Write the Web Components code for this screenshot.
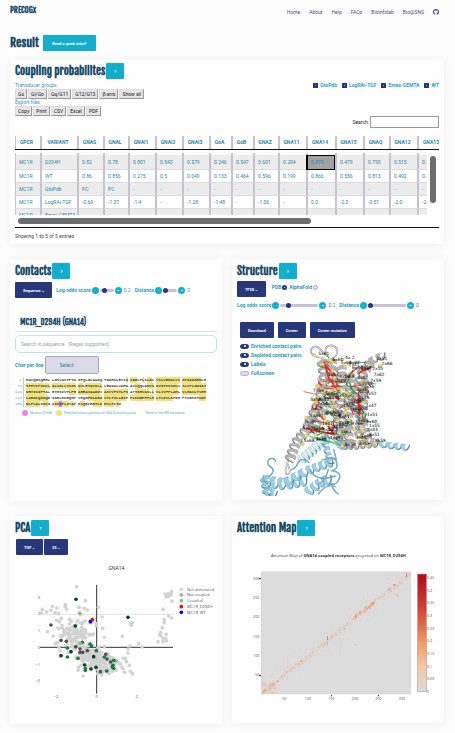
<!DOCTYPE html>
<html lang="en">
<head>
<meta charset="utf-8">
<title>PRECOGx</title>
<style>
  body { margin: 0; background: #fdfdfd; color: #444; font: 5px/6px Roboto, "Liberation Sans", sans-serif; }
</style>
</head>
<body>
<precog-app></precog-app>
<script>
const COMMON = `
  *, *::before, *::after { box-sizing: border-box; }
  :host { display: block; --teal: #11aecd; --navy: #283779; --ink: #174a68; --head: "Fjalla One", "Liberation Sans Narrow", "Liberation Sans", sans-serif; }
  button, input, select { font: inherit; margin: 0; }
  h1, h2, h3 { margin: 0; font-family: var(--head); font-weight: 700; color: var(--ink); }
  label { color: #2c9dbb; }
  svg { display: block; width: 100%; height: auto; }
`;
function define(name, html, setup) {
  customElements.define(name, class extends HTMLElement {
    connectedCallback() {
      if (this.shadowRoot) return;
      const root = this.attachShadow({ mode: 'open' });
      const t = document.createElement('template');
      const body = typeof html === 'function' ? html(this) : html;
      t.innerHTML = body.replace('<style>', '<style>' + COMMON);
      root.append(t.content.cloneNode(true));
      if (setup) setup(root, this);
    }
  });
}
function rng(seed) {
  return () => { seed = (seed * 1664525 + 1013904223) >>> 0; return seed / 4294967296; };
}

define('action-button', el => `
<style>
  :host { display: inline-block; }
  button { display: block; height: 16px; padding: 0 8px; border: 0; border-radius: 1px; background: var(--teal); color: #fff; font-size: 4px; font-weight: 700; line-height: 5px; white-space: nowrap; }
  :host([tone="navy"]) button { background: var(--navy); }
  :host([wide]) button { padding: 0 9px; }
</style>
<button type="button"><slot></slot></button>`);

define('panel-card', el => `
<style>
  :host { background: #fefefe; padding: 4px 5px; box-shadow: 0 1px 9px rgba(0,0,0,.055); min-width: 0; }
  header { display: flex; align-items: center; gap: 1px; height: 16px; }
  h2 { font-size: 11px; line-height: 16px; white-space: nowrap; }
</style>
<header><h2>${el.getAttribute('heading')}</h2><action-button>?</action-button></header>
<slot></slot>`);

define('site-header', `
<style>
  header { display: flex; justify-content: space-between; align-items: center; padding: 0 16px 0 10px; height: 20px; }
  .brand { font: 700 8px/12px var(--head); color: var(--ink); text-decoration: none; }
  nav { display: flex; align-items: center; gap: 9px; padding-top: 3px; }
  nav a { color: #47508c; text-decoration: none; }
  svg { width: 6px; height: 6px; }
</style>
<header><a class="brand" href="#">PRECOGx</a>
<nav><a href="#">Home</a><a href="#">About</a><a href="#">Help</a><a href="#">FAQs</a><a href="#">Bioinfolab</a><a href="#">Bio@SNS</a>
<a href="#" aria-label="GitHub"><svg viewBox="0 0 16 16"><path fill="#283779" d="M8 0C3.58 0 0 3.58 0 8c0 3.54 2.29 6.53 5.47 7.59.4.07.55-.17.55-.38 0-.19-.01-.82-.01-1.49-2.01.37-2.53-.49-2.69-.94-.09-.23-.48-.94-.82-1.13-.28-.15-.68-.52-.01-.53.63-.01 1.08.58 1.23.82.72 1.21 1.87.87 2.33.66.07-.52.28-.87.51-1.07-1.78-.2-3.64-.89-3.64-3.95 0-.87.31-1.59.82-2.15-.08-.2-.36-1.02.08-2.12 0 0 .67-.21 2.2.82.64-.18 1.32-.27 2-.27s1.36.09 2 .27c1.53-1.04 2.2-.82 2.2-.82.44 1.1.16 1.92.08 2.12.51.56.82 1.27.82 2.15 0 3.07-1.87 3.75-3.65 3.95.29.25.54.73.54 1.48 0 1.07-.01 1.93-.01 2.2 0 .21.15.46.55.38A8.01 8.01 0 0 0 16 8c0-4.42-3.58-8-8-8z"/></svg></a></nav></header>`);

const COLS = ['GPCR','VARIANT','GNAS','GNAL','GNAI1','GNAI2','GNAI3','GoA','GoB','GNAZ','GNA11','GNA14','GNA15','GNAQ','GNA12','GNA13'];
const W = [25,37,26,25,27,27,27,22,22,25,28,29,28,26,28,29];
const ROWS = [
  ['MC1R','D294H','0.82','0.78','0.801','0.543','0.579','0.246','0.547','0.601','0.204','0.879','0.479','0.795','0.515','0.536'],
  ['MC1R','WT','0.86','0.856','0.275','0.5','0.049','0.133','0.464','0.596','0.199','0.866','0.556','0.813','0.492','0.495'],
  ['MC1R','GtoPdb','PC','PC','-','-','-','-','-','-','-','-','-','-','-','-'],
  ['MC1R','LogRAi-TGF','-0.69','-1.37','-1.4','-','-1.28','-1.48','-','-1.06','-','0.0','-2.0','-0.51','-2.0','-2.0'],
  ['MC1R','Emax-GEMTA','-','-','-','-','-','-','-','-','-','-','-','-','-','-'],
];
const colgroup = '<colgroup>' + W.map(w => `<col style="width:${w}px">`).join('') + '</colgroup>';
define('coupling-table', `
<style>
  :host { border-bottom: 1px solid #111; }
  table { border-collapse: separate; border-spacing: 0; table-layout: fixed; width: 431px; }
  .head { overflow: hidden; height: 14px; border-bottom: 1px solid #111; }
  th { height: 13px; padding: 0 3px 1px 0; border-left: 1px solid #c3c1d2; color: #2389aa; font-weight: 700; text-align: center; white-space: nowrap; }
  th + th, td + td { border-left-width: 2px; }
  .mid { display: flex; justify-content: space-between; padding: 3px 3px 0 0; }
  .body { flex: 0 1 412px; overflow: hidden; height: 62px; }
  tr.lead td { height: 2px; border-bottom: 0; background: #fefefe; }
  td { height: 13px; padding: 0 0 1px 3px; border-left: 1px solid #c3c1d2; border-bottom: 1px solid #dcdcdf; color: #2e86ad; white-space: nowrap; overflow: hidden; }
  tr.first td { height: 15px; }
  tr.alt { background: #ececec; }
  td.best { background: #a1a1a1; outline: 1px solid #000; outline-offset: -1px; border-left-color: #000; }
  .vbar { width: 6px; height: 47px; margin-top: 3px; border-radius: 3px; background: #6d6d6d; }
  .hbar { width: 69%; height: 6px; margin: 3px 0 3px 3px; border-radius: 3px; background: #6d6d6d; }
</style>
<div class="head"><table>${colgroup}<thead><tr>${COLS.map(c => `<th scope="col">${c}</th>`).join('')}</tr></thead></table></div>
<div class="mid"><div class="body"><table>${colgroup}<tbody><tr class="lead" aria-hidden="true">${COLS.map(() => '<td></td>').join('')}</tr>
${ROWS.map((r, i) => `<tr class="${i % 2 ? '' : 'alt'}${i ? '' : ' first'}">${r.map((v, j) => `<td${i === 0 && j === 11 ? ' class="best"' : ''}>${v}</td>`).join('')}</tr>`).join('')}
</tbody></table></div><div class="vbar"></div></div><div class="hbar"></div>`);

define('coupling-panel', `
<style>
  .cap { color: #2c9dbb; line-height: 7px; }
  .top { display: flex; justify-content: space-between; padding-top: 3px; }
  .row { display: flex; gap: 1px; height: 10px; }
  .row button { height: 10px; padding: 0 2px; background: #e6e6ea; color: #222; border: 1px solid; border-color: #ddd #999 #999 #ddd; line-height: 6px; white-space: nowrap; }
  .checks { display: flex; gap: 5px; height: 6px; font-weight: 700; }
  .checks label { display: flex; align-items: center; gap: 2px; color: #1fa5c4; }
  .checks input { appearance: none; width: 5px; height: 5px; background: var(--navy); display: grid; place-items: center; }
  .checks input:checked::after { content: ""; width: 1px; height: 1px; background: #98a0c8; }
  .search { display: flex; justify-content: flex-end; align-items: center; gap: 1px; margin-bottom: 8px; }
  .search label { color: #222; }
  .search input { width: 69px; height: 12px; border: 1px solid #999; background: #fff; padding: 0 2px; }
  p { margin: 5px 0 1px; line-height: 6px; }
</style>
<panel-card heading="Coupling probabilites">
  <div class="top"><div>
    <div class="cap">Transducer groups</div>
    <div class="row"><button>Gs</button><button>Gi/Go</button><button>Gq/G11</button><button>G12/G13</button><button>β-arrs</button><button>Show all</button></div>
    <div class="cap">Export files</div>
    <div class="row"><button>Copy</button><button>Print</button><button>CSV</button><button>Excel</button><button>PDF</button></div>
  </div>
  <div class="checks">${['GtoPdb','LogRAi-TGF','Emax-GEMTA','WT'].map(c => `<label><input type="checkbox" checked>${c}</label>`).join('')}</div></div>
  <div class="search"><label for="q">Search:</label><input id="q" type="search"></div>
  <coupling-table></coupling-table>
  <p>Showing 1 to 5 of 5 entries</p>
</panel-card>`);

define('score-slider', el => `
<style>
  :host { display: flex; align-items: center; gap: 1px; height: 8px; color: #2c9dbb; white-space: nowrap; }
  label { font-weight: 700; }
  button { width: 7px; height: 7px; border: 0; border-radius: 50%; padding: 0; background: var(--teal); color: #fff; font-size: 4px; line-height: 7px; }
  input { appearance: none; background: none; width: var(--track, 14px); height: 5px; }
  input::-webkit-slider-runnable-track { height: 3px; border-radius: 2px; background: #c5c3d3; }
  input::-webkit-slider-thumb { appearance: none; width: 5px; height: 5px; margin-top: -1px; border-radius: 50%; background: var(--navy); }
  output { padding-left: 1px; color: #3f93ad; }
</style>
<label for="r">${el.getAttribute('label')}</label><button type="button" aria-label="Decrease">-</button><input id="r" type="range" min="0" max="100" value="${el.getAttribute('at')}"><button type="button" aria-label="Increase">+</button><output for="r">${el.getAttribute('value')}</output>`);

const SEQ = [
  [1, 'MAVQGSQRRLLGSLNSTPTAIPQLGLAANQTGARCLEVSISDGLFLSLGLVSLVENALVVATIAKNRNLH', '000000000000000000000000000000000000000111100101101111111111111111110000'],
  [71, 'SPMYCFICCLALSDLLVSGSNVLETAVILLLEAGALVARAAVLQQLDNVIDVITCSSMLSSLCFLGAIAV', '1111111111111111111111011111110000000000001100011111111111101111111111'],
  [141, 'DRYISIFYALRYHSIVTLPRARRAVAAIWVASVVFSTLFIAYYDHVAVLLCLVVFFLAMLVLMAVLYVHM', '1111111100000000011111111111101111111111001111110111111111101111111111'],
  [211, 'LARACQHAQGIARLHKRQRPVHQGFGLKGAVTLTILLGIFFLCWGPFFLHLTLIVLCPEHPTCGCIFKNF', '1111111110000000000000001111111111111110111111111111111110000000000111'],
  [281, 'NLFLALIICNAIIDPLIYAFHSQELRRTLKEVLTCSW', '1111110110011211101001100011111111010'],
];
function seqLine([n, s, m]) {
  let out = '';
  for (let g = 0; g < s.length; g += 10) {
    out += '<span>';
    for (let i = g; i < Math.min(g + 10, s.length);) {
      let j = i;
      while (j < Math.min(g + 10, s.length) && m[j] === m[i]) j++;
      const part = s.slice(i, j);
      out += m[i] === '1' ? `<mark>${part}</mark>` : m[i] === '2' ? `<mark class="mut">${part}</mark>` : part;
      i = j;
    }
    out += '</span>';
  }
  return `<li><b>${n}</b>${out}</li>`;
}
define('contacts-panel', `
<style>
  .row { display: flex; align-items: center; gap: 4px; padding-top: 3px; }
  h3 { font-size: 8px; line-height: 12px; padding: 18px 5px 3px; border-bottom: 1px solid #dde0ea; }
  .find { display: block; width: 100%; height: 18px; margin-top: 3px; padding: 0 5px; border: 1px solid #bfe6ee; border-radius: 5px; background: #fff; }
  .find::placeholder { color: #a0a4ab; }
  .cpl { display: flex; align-items: center; gap: 1px; margin-top: 3px; }
  .cpl label { font-weight: 700; }
  select { appearance: none; width: 54px; height: 18px; border: 1px solid #a9a7b8; border-radius: 2px; background: #dadae8; color: #2c83a5; padding: 0 14px; }
  ol { list-style: none; margin: 3px 0 0; padding: 0; font: 700 4px/6px "Liberation Mono", monospace; color: #444; }
  li { display: flex; gap: 2px; white-space: nowrap; }
  li b { width: 7px; text-align: right; color: #3a9bb5; font-weight: 400; border-right: 1px solid #bcd; padding-right: 1px; box-sizing: content-box; }
  mark { background: #f0e27c; color: inherit; padding: 1px 0; }
  mark.mut { background: #ee6fee; }
  .legend { display: flex; align-items: center; gap: 2px; margin: 3px 7px 81px; font-size: 3px; color: #5db0c4; white-space: nowrap; }
  i { width: 6px; height: 6px; border-radius: 50%; background: #ee7fee; }
  i.y { background: #eee086; margin-left: 2px; }
  .hov { margin-left: 8px; }
</style>
<panel-card heading="Contacts">
  <div class="row"><action-button tone="navy">Sequence ~</action-button><score-slider label="Log odds score" at="30" value="0.2"></score-slider><score-slider label="Distance" at="0" value="0"></score-slider></div>
  <h3>MC1R_D294H (GNA14)</h3>
  <input class="find" type="text" aria-label="Search in sequence" placeholder="Search in sequence.  (Regex supported)">
  <div class="cpl"><label for="c">Char per line</label><select id="c"><option>Select</option></select></div>
  <ol>${SEQ.map(seqLine).join('')}</ol>
  <div class="legend"><i></i>Mutation D294H<i class="y"></i>Predicted contact positions for GNA14 coupling group<span class="hov">Hover to view BW annotation</span></div>
</panel-card>`);

/* Cartoon view of the receptor and its G protein. */
function protein() {
  const r = rng(11);
  let s = '';
  const helix = (pts, w, fill, edge, step = 20) => {
    for (let k = 0; k < pts.length - 1; k++) {
      const [x1, y1] = pts[k], [x2, y2] = pts[k + 1];
      const L = Math.hypot(x2 - x1, y2 - y1), n = Math.max(1, Math.round(L / step));
      const ux = (x2 - x1) / L, uy = (y2 - y1) / L, nx = -uy, ny = ux, d = L / n;
      for (let i = 0; i < n; i++) {
        const cx = x1 + ux * d * (i + .5), cy = y1 + uy * d * (i + .5);
        const P = (a, b) => `${(cx + nx * a * w + ux * b * d).toFixed(1)} ${(cy + ny * a * w + uy * b * d).toFixed(1)}`;
        s += `<path d="M${P(.5, 0)}Q${P(.7, .6)} ${P(-.5, .75)}" fill="none" stroke="${edge}" stroke-width="4"/>`;
        s += `<path d="M${P(-.55, -.35)}Q${P(-.2, -.9)} ${P(.55, -.1)}L${P(.55, .4)}Q${P(-.1, -.3)} ${P(-.55, .2)}Z" fill="${fill}" stroke="${edge}" stroke-width=".8"/>`;
      }
    }
  };
  const G = ['#b4b4b4', '#7d7d7d'], B = ['#9acfe6', '#4f8ba8'];
  const line = (d, c, w) => { s += `<path d="${d}" fill="none" stroke="${c}" stroke-width="${w}" stroke-linecap="round"/>`; };
  // G protein
  helix([[90, 420], [98, 472]], 26, ...B);
  helix([[84, 436], [150, 444], [212, 432]], 32, ...B, 22);
  helix([[150, 440], [215, 405], [290, 378]], 24, ...B, 22);
  helix([[195, 374], [238, 338], [276, 300]], 26, '#d5edf6', '#4f8ba8', 13);
  helix([[270, 296], [277, 350], [290, 380]], 16, ...B);
  helix([[305, 328], [350, 324]], 22, ...B);
  helix([[430, 324], [475, 330], [518, 334]], 16, ...B);
  helix([[215, 470], [262, 436], [285, 430]], 26, ...B, 22);
  helix([[90, 468], [122, 474]], 20, ...B);
  const loops = 'M85 420Q84 436 98 442M122 376Q116 362 102 370Q92 382 106 392Q124 404 104 420M222 380Q200 360 190 380T170 400M262 372Q300 356 305 380T288 404Q322 408 312 430T284 440Q300 470 310 474M250 474Q276 440 300 452M280 400Q270 440 250 444M225 400Q240 440 300 420M296 340L305 376';
  line(loops, '#4b8ba8', 4);
  line(loops, '#9dd2e8', 2);
  // Receptor loops and helices
  const turns = 'M262 66Q222 60 228 40Q240 22 256 40T276 60Q262 30 290 28Q314 34 304 58L292 68M160 370L152 400Q150 418 160 414T158 384';
  line(turns, '#888', 5);
  line(turns, '#e2e2e2', 3);
  helix([[262, 70], [268, 130], [252, 200], [216, 280], [182, 322], [164, 372]], 28, ...G);
  helix([[290, 70], [286, 150], [270, 220], [230, 282]], 28, ...G);
  helix([[318, 88], [322, 170], [310, 240], [318, 312]], 28, ...G);
  helix([[345, 110], [350, 190], [338, 250], [344, 330]], 24, ...G);
  helix([[408, 78], [378, 120], [366, 190], [380, 260], [400, 320]], 28, ...G);
  helix([[388, 130], [384, 210], [372, 300]], 24, ...G);
  helix([[318, 328], [370, 326], [426, 320]], 24, ...G);
  helix([[404, 78], [424, 66], [446, 60]], 20, ...G);
  // Contact pairs
  const inside = () => { const t = r(); const y = 75 + t * 235; const l = 262 - t * 68, h = 400 - t * 6; return [l + r() * (h - l), y]; };
  for (let i = 0; i < 66; i++) {
    const [x, y] = inside(), a = r() * 6.28, q = 10 + r() * 28;
    line(`M${x.toFixed(0)} ${y.toFixed(0)}L${(x + Math.cos(a) * q).toFixed(0)} ${(y + Math.sin(a) * q).toFixed(0)}`, r() < .52 ? '#f3201c' : '#18963e', 1.5 + r() * 2);
  }
  line('M268 80L282 128M272 90L300 118M284 128L304 160M290 150L310 152M370 170L372 236M366 200L380 214M390 104L408 92M300 180L310 190M242 218L252 192M215 278L300 296M260 242L298 296M388 100L372 112', '#f3201c', 5);
  line('M222 300L322 330M262 290L322 330M230 306L304 320M268 206L300 250M280 210L320 236', '#18a048', 2);
  for (let i = 0; i < 62; i++) { const [x, y] = inside(); s += `<circle cx="${x.toFixed(0)}" cy="${y.toFixed(0)}" r="5" fill="#e8dc7c" stroke="#a79c4b"/>`; }
  [[239,58],[286,72],[322,70],[203,324],[321,330],[374,320],[396,331],[420,322],[435,90]].forEach(([x, y]) => s += `<circle cx="${x}" cy="${y}" r="5" fill="#e8dc7c" stroke="#a79c4b"/>`);
  s += '<circle cx="313" cy="238" r="5" fill="#a025c0"/>';
  const lab = [['5x61',250,56],['6x61',292,76],['4x.2',330,70],['3x51',424,71],['2x66',440,88],['2x55',412,103],['7x62',416,120],['2x59',406,139],['1x56',386,157],['7x52',392,176],['1x47',392,212],['1x51',396,240],['1x60',394,260],['1x55',402,272],['2x43',396,286],['8x51',402,301],['8x59',420,318],['8x53',372,328],['8x50',330,330],['5x68',206,318]];
  for (let i = 0; i < 62; i++) {
    const [x, y] = inside();
    lab.push([(1 + Math.floor(r() * 7)) + 'x' + (36 + Math.floor(r() * 28)), Math.round(x - 14), Math.round(y + 5)]);
  }
  s += lab.map(([t, x, y]) => `<text x="${x}" y="${y}">${t}</text>`).join('');
  return s;
}
define('structure-panel', `
<style>
  .row { display: flex; align-items: center; gap: 6px; padding-top: 2px; }
  .row label { font-weight: 700; display: flex; align-items: center; gap: 1px; }
  .opts { display: flex; gap: 2px; padding-bottom: 4px; }
  input[type=radio] { appearance: none; width: 5px; height: 5px; border: 1px solid #a9a7b8; border-radius: 50%; background: #e4e2ee; }
  input[type=radio]:checked { background: #fff; border: 2px solid var(--navy); }
  .sliders { display: flex; gap: 4px; --track: 38px; padding-top: 4px; }
  .acts { display: flex; gap: 4px; padding: 13px 3px 3px; }
  .view { position: relative; }
  .tog { position: absolute; left: 3px; top: 2px; display: grid; gap: 3px; font-weight: 700; }
  .tog label { display: flex; align-items: center; gap: 2px; height: 6px; }
  .tog input { appearance: none; width: 9px; height: 5px; border-radius: 3px; background: #dddbe8; border: 1px solid #b5b3c4; display: flex; align-items: center; justify-content: center; }
  .tog input:checked { background: var(--navy); border-color: var(--navy); }
  .tog input:checked::after { content: ""; width: 2px; height: 2px; border-radius: 50%; background: #fff; }
  text { font: 13px "DejaVu Sans", sans-serif; fill: #000; }
</style>
<panel-card heading="Structure">
  <div class="row"><action-button tone="navy">7F58 ~</action-button><div class="opts"><label>PDB <input type="radio" name="src" checked></label><label>AlphaFold <input type="radio" name="src"></label></div></div>
  <div class="sliders"><score-slider label="Log odds score" at="18" value="0.2"></score-slider><score-slider label="Distance" at="0" value="0"></score-slider></div>
  <div class="acts"><action-button tone="navy">Download</action-button><action-button tone="navy">Center</action-button><action-button tone="navy">Center mutation</action-button></div>
  <div class="view"><svg viewBox="6 15 606 465" role="img" aria-label="Receptor structure">${protein()}</svg>
  <div class="tog">${['Enriched contact pairs','Depleted contact pairs','Labels','Fullscreen'].map((t, i) => `<label><input type="checkbox" role="switch"${i < 3 ? ' checked' : ''}>${t}</label>`).join('')}</div></div>
</panel-card>`);

/* Scatter plot, in units of a third of a pixel at the default width. */
function scatter() {
  const r = rng(5), g = () => (r() + r() + r() + r() - 2) * 1.1;
  let s = '';
  const dots = (list, c) => list.forEach(([x, y]) => s += `<circle cx="${x}" cy="${y}" r="5.5" fill="${c}"/>`);
  const light = [[230,-40],[256,2],[237,22],[253,25],[262,30],[295,22],[196,14],[200,28],[195,20],[157,19],[170,24],[153,31],[140,36],[165,38],[176,41],[127,28],[124,39],[169,61],[178,65],[184,55],[142,95],[160,108],[170,128],[306,51],[289,77],[308,85],[367,109],[391,72],[397,68],[394,76],[489,28],[506,48],[493,59],[492,68],[515,54],[487,83],[482,97],[479,104],[483,108],[498,103],[497,115],[499,122],[489,115],[489,125],[474,125],[416,131],[426,141],[390,138],[384,147],[384,159],[388,196],[391,214],[397,221],[374,217],[357,192],[376,175],[496,-18],[503,-16],[509,-14],[498,-9],[506,-11],[515,-25],[516,4],[513,-16],[505,-19],[500,-12],[233,62],[250,66],[234,211],[249,228]];
  for (let i = 0; i < 105; i++) light.push([Math.round(224 + g() * 40), Math.round(104 + g() * 36)]);
  for (let i = 0; i < 200; i++) { const t = r(); light.push([Math.round(250 + t * 85 + g() * 32), Math.round(155 + t * 45 + g() * 25)]); }
  dots(light.filter(([x, y]) => y < 230 && x > 120), '#d2d2d2');
  dots([[153,75],[183,121],[199,124],[227,140],[247,127],[240,147],[240,157],[248,157],[262,152],[317,163],[321,177],[332,186],[301,215],[337,200]], '#505050');
  dots([[313,112],[369,175]], '#c3e6bf');
  dots([[239,40],[241,130],[348,183]], '#79c67a');
  dots([[202,144],[202,171],[270,132],[275,138],[289,152],[234,175],[256,205],[256,211],[313,171],[341,181],[339,196],[320,213],[341,205]], '#147c3c');
  dots([[228,-2],[226,78],[384,52],[213,155],[183,167],[288,202],[273,207],[281,170],[254,195]], '#06451f');
  dots([[277,59]], '#f00'); dots([[271,65]], '#00f');
  return s;
}
define('pca-panel', `
<style>
  .row { display: flex; gap: 1px; padding: 3px 1px; }
  text { font: 12px "Open Sans", sans-serif; fill: #555; }
  .t { font-size: 15px; fill: #333; }
  .e { text-anchor: end; } .m { text-anchor: middle; }
</style>
<panel-card heading="PCA">
  <div class="row"><action-button tone="navy">TGF ~</action-button><action-button tone="navy">33 ~</action-button></div>
  <svg viewBox="45 -126 606 486" role="img" aria-label="PCA plot for GNA14">
    <text class="t m" x="349" y="-91">GNA14</text>
    <path d="M120 43H519" stroke="#e4e4e4" stroke-width="3"/>
    <path d="M120 142H519M290 -45V281" stroke="#333" stroke-width="3"/>
    ${scatter()}
    ${[['3',-4],['2',46],['1',96],['0',146],['−1',197],['−2',245]].map(([t, y]) => `<text class="e" x="120" y="${y}">${t}</text>`).join('')}
    <text class="m" x="168" y="294">−2</text><text class="m" x="290" y="294">0</text><text class="m" x="411" y="294">2</text>
    ${[['Not annotated','#d2d2d2',-32],['Not coupled','#a8a8a8',-15],['Coupled','#79c67a',2],['MC1R_D294H','#f00',20],['MC1R_WT','#00f',37]].map(([t, c, y]) => `<circle cx="544" cy="${y}" r="5.5" fill="${c}"/><text x="561" y="${y + 4}">${t}</text>`).join('')}
  </svg>
</panel-card>`);

/* Heat map: cells scattered tightly along the diagonal over a grey field. */
function heat() {
  const r = rng(23);
  let s = '';
  const cell = (x, y, w, h, c, o) => s += `<rect x="${x.toFixed(1)}" y="${y.toFixed(1)}" width="${w}" height="${h}" fill="${c}" opacity="${o.toFixed(2)}"/>`;
  for (let i = 0; i < 240; i++) {
    const t = r(), x = 104 + t * 444, y = 276 - t * 358;
    cell(x + (r() - .5) * 10, Math.max(-86, y + (r() - .5) * 12), 4, 5, '#f3ae84', .15 + r() * .35);
  }
  for (let i = 0; i < 150; i++) {
    const t = r(), x = 106 + t * 436, y = 276 - t * 350;
    cell(x, Math.max(-84, Math.min(274, y + (r() - .5) * 90)), 3, 5, '#f0bc9c', .08 + r() * .14);
  }
  for (let i = 0; i < 60; i++) cell(104 + r() * 42, 242 + r() * 32, 3, 8, '#f3a677', .1 + r() * .25);
  for (let i = 0; i < 36; i++) { const x = 395 + r() * 45; cell(x, 326 - x * .74 + r() * 10 - 2, 4, 6, '#f49a60', .15 + r() * .35); }
  for (let i = 0; i < 60; i++) cell(102, -60 + r() * 320, 3, 5, '#f3b691', .3);
  [170, 182, 340].forEach((x, k) => cell(x, [175, 170, 110][k], 2, 55, '#f0bc9c', .3));
  [[300,108,3,10,'#e2614a'],[300,124,3,12,'#f1a37a'],[384,42,4,12,'#ec8455'],[220,180,4,4,'#e07050'],[150,240,5,5,'#ee9166'],[106,272,6,6,'#f4a06c'],[537,-82,2,13,'#c5403a'],[500,-49,4,5,'#e2502d'],[484,-36,4,6,'#ee8855'],[436,6,4,6,'#ef7a38'],[384,130,4,6,'#f3b691'],[508,-20,8,10,'#f3c3a5']].forEach(([x, y, w, h, c]) => cell(x, y, w, h, c, .8));
  return s;
}
define('attention-panel', `
<style>
  text { font: 11px "Open Sans", sans-serif; fill: #555; }
  .t { font-size: 12px; fill: #333; }
  .e { text-anchor: end; } .m { text-anchor: middle; }
</style>
<panel-card heading="Attention Map">
  <svg viewBox="30 -193 606 549" role="img" aria-label="Attention map">
    <defs><linearGradient id="g" x1="0" y1="0" x2="0" y2="1"><stop offset="0" stop-color="#b20a1c"/><stop offset=".3" stop-color="#cf4436"/><stop offset=".6" stop-color="#f49f66"/><stop offset=".78" stop-color="#f5c6a4"/><stop offset="1" stop-color="#dcdcdc"/></linearGradient></defs>
    <text class="t m" x="334" y="-131">Attention Map of <tspan font-weight="700">GNA14-coupled receptors</tspan> projected on <tspan font-weight="700">MC1R_D294H</tspan></text>
    <rect x="102" y="-87" width="450" height="369" fill="#dcdcdc"/>
    ${heat()}
    ${[['300',-65],['250',-8],['200',50],['150',109],['100',166],['50',224]].map(([t, y]) => `<text class="e" x="97" y="${y + 4}">${t}</text>`).join('')}
    ${[['50',172],['100',243],['150',313],['200',384],['250',454],['300',525]].map(([t, x]) => `<text class="m" x="${x}" y="299">${t}</text>`).join('')}
    <path d="M96 -65H102M96 226H102M313 284V288M454 284V288" stroke="#222" stroke-width="3"/>
    <rect x="571" y="-79" width="28" height="353" fill="url(#g)" stroke="#b4a8a4" stroke-width="2"/>
    ${['0.45','0.4','0.35','0.3','0.25','0.2','0.15','0.1','0.05','0'].map((t, i) => `<text x="600" y="${-64 + i * 38}">${t}</text>`).join('')}
  </svg>
</panel-card>`);

define('precog-app', `
<style>
  .intro { display: flex; align-items: center; gap: 4px; padding: 15px 10px 8px; }
  h1 { font-size: 12px; line-height: 16px; }
  .grid { display: grid; gap: 15px 10px; padding: 0 11px 9px 10px; grid-template-columns: 1fr 1fr; align-items: stretch; }
  coupling-panel { grid-column: 1 / -1; }
  coupling-panel, contacts-panel, structure-panel, pca-panel, attention-panel { min-width: 0; }
</style>
<site-header></site-header>
<main>
  <div class="intro"><h1>Result</h1><action-button wide>Need a quick intro?</action-button></div>
  <div class="grid"><coupling-panel></coupling-panel><contacts-panel></contacts-panel><structure-panel></structure-panel><pca-panel></pca-panel><attention-panel></attention-panel></div>
</main>`);
</script>
</body>
</html>
